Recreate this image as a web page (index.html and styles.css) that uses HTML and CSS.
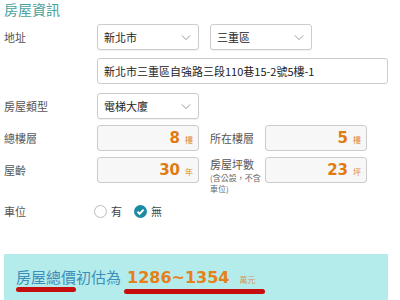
FILE: index.html
```html
<!DOCTYPE html>
<html lang="zh-Hant">
<head>
    <meta charset="UTF-8">
    <meta name="viewport" content="width=device-width, initial-scale=1.0">
    <title>房屋資訊</title>
    <link rel="stylesheet" href="styles.css">
</head>
<body>
    <h2 class="title">房屋資訊</h2>

    <div class="row row-select">
        <div class="label">地址</div>
        <div class="select"><span>新北市</span><svg class="chev" viewBox="0 0 12 8"><path d="M1 1.5 L6 6.5 L11 1.5"/></svg></div>
        <div class="select select-2"><span>三重區</span><svg class="chev" viewBox="0 0 12 8"><path d="M1 1.5 L6 6.5 L11 1.5"/></svg></div>
    </div>

    <div class="row row-address">
        <div class="label"></div>
        <div class="input address">新北市三重區自強路三段110巷15-2號5樓-1</div>
    </div>

    <div class="row row-type">
        <div class="label">房屋類型</div>
        <div class="select"><span>電梯大廈</span><svg class="chev" viewBox="0 0 12 8"><path d="M1 1.5 L6 6.5 L11 1.5"/></svg></div>
    </div>

    <div class="row row-num">
        <div class="label">總樓層</div>
        <div class="input num"><b>8</b><small>樓</small></div>
        <div class="label label-2">所在樓層</div>
        <div class="input num"><b>5</b><small>樓</small></div>
    </div>

    <div class="row row-num">
        <div class="label">屋齡</div>
        <div class="input num"><b>30</b><small>年</small></div>
        <div class="label label-2 multi">房屋坪數<span class="note">(含公設，不含<br>車位)</span></div>
        <div class="input num"><b>23</b><small>坪</small></div>
    </div>

    <div class="row row-radio">
        <div class="label">車位</div>
        <label class="radio"><span class="dot"></span>有</label>
        <label class="radio"><span class="dot on"><svg viewBox="0 0 12 12"><path d="M3.2 6.2 L5.2 8.1 L8.9 4.2"/></svg></span>無</label>
    </div>

    <div class="result">
        <span class="result-label">房屋總價初估為</span>
        <span class="result-value">1286~1354</span>
        <span class="result-unit">萬元</span>
    </div>
</body>
</html>
```

FILE: styles.css
```css
body {
    margin: 0;
    padding: 0 12px 0 4px;
    font-family: "Noto Sans CJK TC", "Noto Sans", sans-serif;
    font-size: 11px;
    color: #333;
    background: #fff;
}
.title {
    margin: 0;
    height: 24px;
    line-height: 18px;
    font-size: 14px;
    font-weight: normal;
    color: #49a19c;
}
.row {
    display: flex;
    align-items: center;
}
.row-select { height: 26px; }
.row-address { height: 26px; margin-top: 8px; }
.row-type { height: 26px; margin-top: 9px; }
.row-num { height: 26px; margin-top: 6px; }
.row-radio { height: 26px; margin-top: 15px; }
.label {
    width: 93px;
    flex: none;
    color: #555;
}
.label-2 {
    width: 55px;
    margin-left: 11px;
}
.multi {
    align-self: flex-start;
    line-height: 15px;
}
.note {
    display: block;
    font-size: 8px;
    line-height: 11px;
    color: #666;
}
.select, .input {
    box-sizing: border-box;
    height: 26px;
    width: 102px;
    flex: none;
    border: 1px solid #ccc;
    border-radius: 3px;
    display: flex;
    align-items: center;
    padding: 0 6px;
    color: #222;
    background: #fff;
}
.select {
    justify-content: space-between;
    box-shadow: 0 1px 1px rgba(0,0,0,0.06);
}
.select-2 { margin-left: 11px; }
.chev {
    width: 10px;
    height: 7px;
    fill: none;
    stroke: #999;
    stroke-width: 1.2;
    margin-right: 1px;
}
.address {
    width: 291px;
}
.num {
    justify-content: flex-end;
    background: #f7f7f7;
    padding-right: 5px;
}
.num b {
    font-family: "DejaVu Sans", sans-serif;
    font-size: 15px;
    font-weight: bold;
    color: #e07b12;
}
.num small {
    font-size: 8px;
    color: #e08a2a;
    margin-left: 5px;
    margin-top: 3px;
}
.radio {
    display: flex;
    align-items: center;
    color: #444;
    margin-right: 12px;
}
.row-radio .label { width: 90px; }
.dot {
    box-sizing: border-box;
    width: 13px;
    height: 13px;
    border: 1px solid #bbb;
    border-radius: 50%;
    margin-right: 4px;
    display: flex;
}
.dot.on {
    border: none;
    background: #1b8aa3;
}
.dot svg {
    width: 13px;
    height: 13px;
    fill: none;
    stroke: #fff;
    stroke-width: 1.8;
}
.result {
    margin-top: 30px;
    width: 384px;
    height: 60px;
    background: #b4eceb;
    padding: 12px 0 0 12px;
    box-sizing: border-box;
    display: flex;
    align-items: baseline;
}
.result-label {
    font-size: 15px;
    color: #3d8fb8;
    position: relative;
}
.result-label::after {
    content: "";
    position: absolute;
    left: 0;
    top: 21px;
    width: 60px;
    height: 5px;
    border-radius: 3px;
    background: #c60e0e;
}
.result-value {
    font-family: "DejaVu Sans", sans-serif;
    font-size: 16px;
    font-weight: bold;
    color: #e5801a;
    margin-left: 6px;
    position: relative;
}
.result-value::after {
    content: "";
    position: absolute;
    left: -3px;
    top: 21px;
    width: 141px;
    height: 5px;
    border-radius: 3px;
    background: #c60e0e;
}
.result-unit {
    font-size: 8px;
    color: #d59a5a;
    margin-left: 10px;
}
```
